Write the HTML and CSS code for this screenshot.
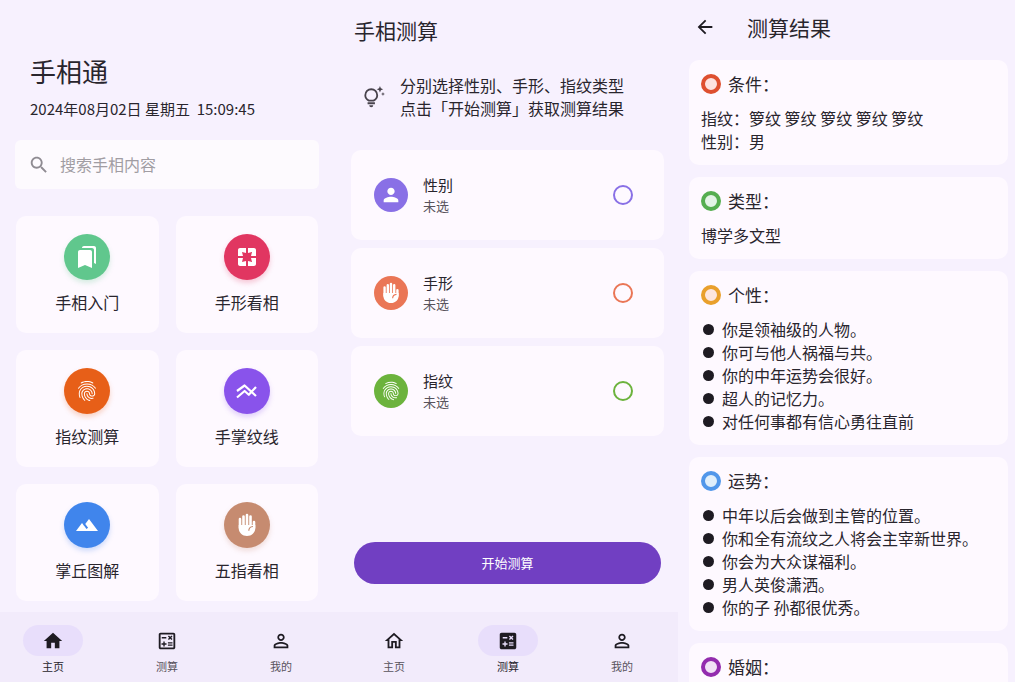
FILE: index.html
```html
<!DOCTYPE html>
<html lang="zh-CN">
<head>
    <meta charset="UTF-8">
    <meta name="viewport" content="width=device-width, initial-scale=1.0">
    <title>手相通</title>
    <link rel="stylesheet" href="styles.css">
</head>
<body>

<!-- Icon set -->
<svg class="icon-set" aria-hidden="true">
    <symbol id="i-search" viewBox="0 0 24 24"><path d="M15.5 14h-.79l-.28-.27C15.41 12.59 16 11.11 16 9.5 16 5.91 13.09 3 9.5 3S3 5.91 3 9.5 5.91 16 9.5 16c1.61 0 3.09-.59 4.23-1.57l.27.28v.79l5 4.99L20.49 19l-4.99-5zm-6 0C7.01 14 5 11.99 5 9.5S7.01 5 9.5 5 14 7.01 14 9.5 11.99 14 9.5 14z"/></symbol>
    <symbol id="i-bookmarks" viewBox="0 0 24 24"><path d="M19 18l2 1V3c0-1.1-.9-2-2-2H8.99C7.89 1 7 1.9 7 3h10c1.1 0 2 .9 2 2v13zM15 5H5c-1.1 0-2 .9-2 2v16l7-3 7 3V7c0-1.1-.9-2-2-2z"/></symbol>
    <symbol id="i-pages" viewBox="0 0 24 24"><path d="M3 5v6h5L7 7l4 1V3H5c-1.1 0-2 .9-2 2zm5 8H3v6c0 1.1.9 2 2 2h6v-5l-4 1 1-4zm9 4l-4-1v5h6c1.1 0 2-.9 2-2v-6h-5l1 4zm2-14h-6v5l4-1-1 4h5V5c0-1.1-.9-2-2-2z"/></symbol>
    <symbol id="i-fingerprint" viewBox="0 0 24 24"><path d="M17.81 4.47c-.08 0-.16-.02-.23-.06C15.66 3.42 14 3 12.01 3c-1.98 0-3.86.47-5.57 1.41-.24.13-.54.04-.68-.2-.13-.24-.04-.55.2-.68C7.82 2.52 9.86 2 12.01 2c2.13 0 3.99.47 6.03 1.52.25.13.34.43.21.67-.09.18-.26.28-.44.28zM3.5 9.72c-.1 0-.2-.03-.29-.09-.23-.16-.28-.47-.12-.7.99-1.4 2.25-2.5 3.75-3.27C9.98 4.04 14 4.03 17.15 5.65c1.5.77 2.76 1.86 3.75 3.25.16.22.11.54-.12.7-.23.16-.54.11-.7-.12-.9-1.26-2.04-2.25-3.39-2.94-2.87-1.47-6.54-1.47-9.4.01-1.36.7-2.5 1.7-3.4 2.96-.08.14-.23.21-.39.21zm6.25 12.07c-.13 0-.26-.05-.35-.15-.87-.87-1.34-1.43-2.01-2.64-.69-1.23-1.05-2.73-1.05-4.34 0-2.97 2.54-5.39 5.66-5.39s5.66 2.42 5.66 5.39c0 .28-.22.5-.5.5s-.5-.22-.5-.5c0-2.42-2.09-4.39-4.66-4.39-2.57 0-4.66 1.97-4.66 4.39 0 1.44.32 2.77.93 3.85.64 1.15 1.08 1.64 1.85 2.42.19.2.19.51 0 .71-.11.1-.24.15-.37.15zm7.17-1.85c-1.19 0-2.24-.3-3.1-.89-1.49-1.01-2.38-2.65-2.38-4.39 0-.28.22-.5.5-.5s.5.22.5.5c0 1.41.72 2.74 1.94 3.56.71.48 1.54.71 2.54.71.24 0 .64-.03 1.04-.1.27-.05.53.13.58.41.05.27-.13.53-.41.58-.57.11-1.07.12-1.21.12zM14.91 22c-.04 0-.09-.01-.13-.02-1.59-.44-2.63-1.03-3.72-2.1-1.4-1.39-2.17-3.24-2.17-5.22 0-1.62 1.38-2.94 3.08-2.94 1.7 0 3.08 1.32 3.08 2.94 0 1.07.93 1.94 2.08 1.94s2.08-.87 2.08-1.94c0-3.77-3.25-6.83-7.25-6.83-2.84 0-5.44 1.58-6.61 4.03-.39.81-.59 1.76-.59 2.8 0 .78.07 2.01.67 3.61.1.26-.03.55-.29.64-.26.1-.55-.04-.64-.29-.49-1.31-.73-2.61-.73-3.96 0-1.2.23-2.29.68-3.24 1.33-2.79 4.28-4.6 7.51-4.6 4.55 0 8.25 3.51 8.25 7.83 0 1.62-1.38 2.94-3.08 2.94s-3.08-1.32-3.08-2.94c0-1.07-.93-1.94-2.08-1.94s-2.08.87-2.08 1.94c0 1.71.66 3.31 1.87 4.51.95.94 1.86 1.46 3.27 1.85.27.07.42.35.35.61-.05.23-.26.38-.47.38z"/></symbol>
    <symbol id="i-lines" viewBox="0 0 24 24"><path d="M2 12l7.600-5.500 11.400 10.500M2 18.500l7.600-6.500 4.200 3.800L21 8" fill="none" stroke="currentColor" stroke-width="2.2" stroke-linejoin="round"/></symbol>
    <symbol id="i-terrain" viewBox="0 0 24 24"><path d="M14 6l-3.75 5 2.85 3.8-1.6 1.2C9.81 13.75 7 10 7 10l-6 8h22L14 6z"/></symbol>
    <symbol id="i-hand" viewBox="0 0 24 24">
        <path d="M5 6v9M8.500 3.500V14M12 2v12M15.500 3.500V14M19 9v6" fill="none" stroke="currentColor" stroke-width="2.6" stroke-linecap="round"/>
        <path d="M3.700 12h16.600v3c0 4.600-3.600 8-8.300 8s-8.300-3.400-8.300-8z"/>
        <path class="crease" d="M18 13.500c-2.800.2-4.200 1.500-4.200 4.300"/>
    </symbol>
    <symbol id="i-home" viewBox="0 0 24 24"><path d="M10 20v-6h4v6h5v-8h3L12 3 2 12h3v8z"/></symbol>
    <symbol id="i-home-line" viewBox="0 0 24 24"><path d="M12 5.69l5 4.5V18h-2v-6H9v6H7v-7.81l5-4.5M12 3L2 12h3v8h6v-6h2v6h6v-8h3L12 3z"/></symbol>
    <symbol id="i-calc-line" viewBox="0 0 24 24"><path d="M19 3H5c-1.1 0-2 .9-2 2v14c0 1.1.9 2 2 2h14c1.1 0 2-.9 2-2V5c0-1.1-.9-2-2-2zm0 16H5V5h14v14z"/><path d="M6.25 7.72h5v1.5h-5zM13 15.75h5v1.5h-5zM13 13.25h5v1.5h-5zM8 18h1.5v-2h2v-1.5h-2v-2H8v2H6V16h2zM14.09 10.95l1.41-1.41 1.41 1.41 1.06-1.06-1.41-1.42 1.41-1.41L16.91 6 15.5 7.41 14.09 6l-1.06 1.06 1.41 1.41-1.41 1.42z"/></symbol>
    <symbol id="i-calc" viewBox="0 0 24 24"><path fill-rule="evenodd" d="M19 3H5c-1.1 0-2 .9-2 2v14c0 1.1.9 2 2 2h14c1.1 0 2-.9 2-2V5c0-1.1-.9-2-2-2zM6.25 7.72h5v1.5h-5zM13 15.75h5v1.5h-5zM13 13.25h5v1.5h-5zM8 18h1.5v-2h2v-1.5h-2v-2H8v2H6V16h2zM14.09 10.95l1.41-1.41 1.41 1.41 1.06-1.06-1.41-1.42 1.41-1.41L16.91 6 15.5 7.41 14.09 6l-1.06 1.06 1.41 1.41-1.41 1.42z"/></symbol>
    <symbol id="i-person-line" viewBox="0 0 24 24"><path d="M12 5.9c1.16 0 2.1.94 2.1 2.1s-.94 2.1-2.1 2.1S9.9 9.16 9.9 8s.94-2.1 2.1-2.1m0 9c2.97 0 6.1 1.46 6.1 2.1v1.1H5.9V17c0-.64 3.13-2.1 6.1-2.1M12 4C9.79 4 8 5.79 8 8s1.79 4 4 4 4-1.79 4-4-1.79-4-4-4zm0 9c-2.67 0-8 1.34-8 4v3h16v-3c0-2.66-5.33-4-8-4z"/></symbol>
    <symbol id="i-person" viewBox="0 0 24 24"><path d="M12 12c2.21 0 4-1.79 4-4s-1.79-4-4-4-4 1.79-4 4 1.79 4 4 4zm0 2c-2.67 0-8 1.34-8 4v2h16v-2c0-2.66-5.33-4-8-4z"/></symbol>
    <symbol id="i-bulb" viewBox="0 0 24 24">
        <path d="M6.500 16C4.300 14.800 2.500 12.800 2.500 10a6.500 6.500 0 0 1 13 0c0 2.800-1.800 4.800-4 6zM5 18.800h8" fill="none" stroke="currentColor" stroke-width="2"/>
        <path d="M6.800 21h4.400a2.200 2.200 0 0 1-4.400 0zM18.500 0l1 2.500 2.500 1-2.500 1-1 2.500-1-2.500-2.500-1 2.500-1zM21.800 6.500l.6 1.600 1.600.6-1.600.6-.6 1.600-.6-1.600-1.600-.6 1.600-.6z"/>
    </symbol>
    <symbol id="i-back" viewBox="0 0 24 24"><path d="M20 11H7.83l5.59-5.59L12 4l-8 8 8 8 1.41-1.41L7.83 13H20v-2z"/></symbol>
</svg>

<div class="screens">

    <!-- Home -->
    <section class="screen">
        <main class="home">
            <h1 class="app-name">手相通</h1>
            <p class="date">2024年08月02日 星期五&nbsp; 15:09:45</p>

            <label class="search">
                <svg class="icon"><use href="#i-search"/></svg>
                <input type="search" placeholder="搜索手相内容" aria-label="搜索手相内容">
            </label>

            <div class="menu">
                <a class="menu-card" href="#"><span class="badge green"><svg class="icon"><use href="#i-bookmarks"/></svg></span>手相入门</a>
                <a class="menu-card" href="#"><span class="badge red"><svg class="icon"><use href="#i-pages"/></svg></span>手形看相</a>
                <a class="menu-card" href="#"><span class="badge orange"><svg class="icon"><use href="#i-fingerprint"/></svg></span>指纹测算</a>
                <a class="menu-card" href="#"><span class="badge purple"><svg class="icon"><use href="#i-lines"/></svg></span>手掌纹线</a>
                <a class="menu-card" href="#"><span class="badge blue"><svg class="icon"><use href="#i-terrain"/></svg></span>掌丘图解</a>
                <a class="menu-card" href="#"><span class="badge brown"><svg class="icon"><use href="#i-hand"/></svg></span>五指看相</a>
            </div>
        </main>

        <nav class="tab-bar">
            <a class="tab active" href="#"><span class="pill"><svg class="icon"><use href="#i-home"/></svg></span>主页</a>
            <a class="tab" href="#"><span class="pill"><svg class="icon"><use href="#i-calc-line"/></svg></span>测算</a>
            <a class="tab" href="#"><span class="pill"><svg class="icon"><use href="#i-person-line"/></svg></span>我的</a>
        </nav>
    </section>

    <!-- Test -->
    <section class="screen">
        <main class="test">
            <h2 class="title">手相测算</h2>

            <div class="hint">
                <svg class="icon"><use href="#i-bulb"/></svg>
                <p>分别选择性别、手形、指纹类型<br>点击「开始测算」获取测算结果</p>
            </div>

            <div class="options">
                <label class="option violet">
                    <span class="avatar"><svg class="icon"><use href="#i-person"/></svg></span>
                    <span class="option-text">性别<small>未选</small></span>
                    <input type="radio" name="gender">
                </label>
                <label class="option coral">
                    <span class="avatar"><svg class="icon"><use href="#i-hand"/></svg></span>
                    <span class="option-text">手形<small>未选</small></span>
                    <input type="radio" name="shape">
                </label>
                <label class="option leaf">
                    <span class="avatar"><svg class="icon"><use href="#i-fingerprint"/></svg></span>
                    <span class="option-text">指纹<small>未选</small></span>
                    <input type="radio" name="fingerprint">
                </label>
            </div>

            <button class="start" type="button">开始测算</button>
        </main>

        <nav class="tab-bar shifted">
            <a class="tab" href="#"><span class="pill"><svg class="icon"><use href="#i-home-line"/></svg></span>主页</a>
            <a class="tab active" href="#"><span class="pill"><svg class="icon"><use href="#i-calc"/></svg></span>测算</a>
            <a class="tab" href="#"><span class="pill"><svg class="icon"><use href="#i-person-line"/></svg></span>我的</a>
        </nav>
    </section>

    <!-- Result -->
    <section class="screen">
        <header class="result-bar">
            <button class="back" type="button" aria-label="返回"><svg class="icon"><use href="#i-back"/></svg></button>
            <h2 class="title">测算结果</h2>
        </header>

        <main class="results">
            <article class="result">
                <h3 class="ring ring-red">条件：</h3>
                <p>指纹：箩纹 箩纹 箩纹 箩纹 箩纹</p>
                <p>性别：男</p>
            </article>
            <article class="result">
                <h3 class="ring ring-green">类型：</h3>
                <p>博学多文型</p>
            </article>
            <article class="result">
                <h3 class="ring ring-amber">个性：</h3>
                <ul>
                    <li>你是领袖级的人物。</li>
                    <li>你可与他人祸福与共。</li>
                    <li>你的中年运势会很好。</li>
                    <li>超人的记忆力。</li>
                    <li>对任何事都有信心勇往直前</li>
                </ul>
            </article>
            <article class="result">
                <h3 class="ring ring-blue">运势：</h3>
                <ul>
                    <li>中年以后会做到主管的位置。</li>
                    <li>你和全有流纹之人将会主宰新世界。</li>
                    <li>你会为大众谋福利。</li>
                    <li>男人英俊潇洒。</li>
                    <li>你的子 孙都很优秀。</li>
                </ul>
            </article>
            <article class="result">
                <h3 class="ring ring-purple">婚姻：</h3>
            </article>
        </main>
    </section>

</div>

</body>
</html>
```
FILE: styles.css
```css
/* General Styles */
*,
*::before {
    box-sizing: border-box;
}

body {
    margin: 0;
    font-family: "Noto Sans CJK SC", sans-serif;
    font-size: 16px;
    line-height: 23px;
    color: #29252d;
    background-color: #f7f1fe;
}

h1, h2, h3, p, ul {
    margin: 0;
    padding: 0;
    font-weight: normal;
}

a {
    color: inherit;
    text-decoration: none;
}

.icon-set {
    display: none;
}

.icon {
    flex: none;
    width: 22px;
    height: 22px;
    fill: currentColor;
}

.screens {
    display: grid;
    grid-template-columns: 334fr 344fr 337fr;
    height: 100vh;
}

.screen {
    display: flex;
    flex-direction: column;
    min-width: 0;
    height: 100vh;
    overflow: hidden;
}

.title {
    font-size: 21px;
    line-height: 30px;
}

/* Home */
.home {
    flex: 1;
    padding: 53px 15px 0;
}

.app-name {
    padding-left: 15px;
    font-size: 26px;
    line-height: 36px;
}

.date {
    padding-left: 15px;
    margin: 8px 0 19px;
    font-size: 15px;
    line-height: 24px;
}

.search {
    display: flex;
    align-items: center;
    gap: 10px;
    height: 49px;
    padding: 0 13px;
    border-radius: 6px;
    background-color: #fdfafe;
    color: #8f8b92;
}

.search input {
    flex: 1;
    min-width: 0;
    padding: 0;
    border: none;
    outline: none;
    background: none;
    font: inherit;
}

.search input::placeholder {
    color: #a19da3;
}

.menu {
    display: grid;
    grid-template-columns: 1fr 1fr;
    gap: 17px;
    margin-top: 27px;
    padding: 0 1px;
}

.menu-card {
    display: flex;
    flex-direction: column;
    align-items: center;
    gap: 10px;
    padding: 18px 0 19px;
    border-radius: 10px;
    background-color: #fef9ff;
    line-height: 24px;
}

.badge {
    display: flex;
    align-items: center;
    justify-content: center;
    width: 46px;
    height: 46px;
    border-radius: 50%;
    color: #fff;
    background-color: var(--tint);
    box-shadow: 0 3px 5px color-mix(in srgb, var(--tint) 25%, transparent);
}

.badge .icon {
    width: 24px;
    height: 24px;
}

.green { --tint: #60c78d; }
.red { --tint: #e13661; }
.orange { --tint: #e75f18; }
.purple { --tint: #8953eb; }
.blue { --tint: #4085ec; }
.brown { --tint: #c68b70; }

.crease {
    fill: none;
    stroke: var(--tint);
    stroke-width: 1.2;
}

/* Bottom tabs */
.tab-bar {
    display: flex;
    justify-content: center;
    padding: 13px 0 8px;
    background-color: #f2ebfb;
}

.tab-bar.shifted {
    padding-left: 4px;
}

.tab {
    display: flex;
    flex: none;
    flex-direction: column;
    align-items: center;
    gap: 2px;
    width: 114px;
    font-size: 11px;
    line-height: 16px;
    color: #58535c;
}

.pill {
    display: flex;
    align-items: center;
    justify-content: center;
    width: 60px;
    height: 31px;
    border-radius: 16px;
    color: #1e1b22;
}

.tab.active {
    color: #29252d;
}

.tab.active .pill {
    background-color: #e8defb;
}

/* Test */
.test {
    display: flex;
    flex: 1;
    flex-direction: column;
    padding: 15px 14px 28px 17px;
}

.test .title {
    padding-left: 3px;
}

.hint {
    display: flex;
    align-items: center;
    gap: 15px;
    margin: 29px 0 30px;
    padding-left: 12px;
    white-space: nowrap;
}

.hint .icon {
    color: #48434c;
}

.options {
    display: flex;
    flex-direction: column;
    gap: 8px;
}

.option {
    display: flex;
    align-items: center;
    gap: 15px;
    height: 90px;
    padding: 0 31px 0 23px;
    border-radius: 10px;
    background-color: #fef9ff;
}

.avatar {
    display: flex;
    align-items: center;
    justify-content: center;
    width: 34px;
    height: 34px;
    border-radius: 50%;
    color: #fff;
    background-color: var(--tint);
}

.option-text {
    flex: 1;
    font-size: 15px;
    line-height: 22px;
}

.option-text small {
    display: block;
    font-size: 13px;
    line-height: 20px;
    color: #58535c;
}

.option input {
    appearance: none;
    width: 20px;
    height: 20px;
    margin: 0;
    border: 2px solid var(--tint);
    border-radius: 50%;
}

.option input:checked {
    background-color: var(--tint);
}

.violet { --tint: #8970e6; }
.coral { --tint: #ea7656; }
.leaf { --tint: #6cb33d; }

.start {
    height: 42px;
    margin: auto 3px 0;
    padding: 0 0 2px;
    border: none;
    border-radius: 21px;
    background-color: #713fc2;
    color: #fff;
    font-family: inherit;
    font-size: 13px;
    cursor: pointer;
}

/* Result */
.result-bar {
    display: flex;
    align-items: center;
    gap: 31px;
    padding: 12px 16px 18px;
}

.back {
    display: flex;
    padding: 0;
    border: none;
    background: none;
    color: #1e1b22;
    cursor: pointer;
}

.results {
    display: flex;
    flex-direction: column;
    gap: 12px;
    padding: 0 7px 12px 11px;
}

.result {
    padding: 11px 12px 12px;
    border-radius: 10px;
    background-color: #fef9ff;
    white-space: nowrap;
}

.ring {
    display: flex;
    align-items: center;
    gap: 7px;
    margin-bottom: 10px;
    font-size: 17px;
    line-height: 26px;
}

.ring::before {
    content: "";
    width: 20px;
    height: 20px;
    border: 4px solid;
    border-radius: 50%;
}

.ring-red::before { border-color: #de5030; background-color: #fde3e0; }
.ring-green::before { border-color: #55ae50; background-color: #e3f4e6; }
.ring-amber::before { border-color: #e9a02c; background-color: #fde6de; }
.ring-blue::before { border-color: #5197ea; background-color: #e0effb; }
.ring-purple::before { border-color: #932cae; background-color: #f1e2f6; }

.result ul {
    list-style: none;
}

.result li {
    display: flex;
    align-items: center;
    gap: 8px;
    padding-left: 2px;
}

.result li::before {
    content: "";
    width: 11px;
    height: 11px;
    border-radius: 50%;
    background-color: #1e1b22;
}
```
